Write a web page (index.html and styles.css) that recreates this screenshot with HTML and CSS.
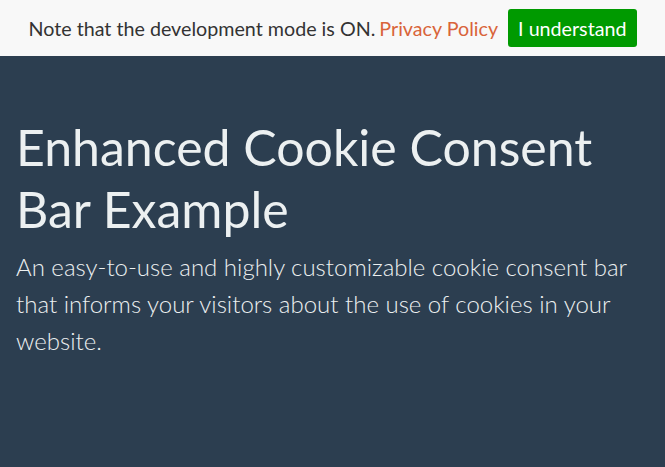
FILE: index.html
```html
<!DOCTYPE html>
<html lang="en">
<head>
    <meta charset="UTF-8">
    <meta name="viewport" content="width=device-width, initial-scale=1.0">
    <title>Enhanced Cookie Consent Bar Example</title>
    <link rel="stylesheet" href="styles.css">
</head>
<body>
    <div class="cookie-bar">
        <span class="cookie-text">Note that the development mode is ON.</span>
        <a href="#" class="cookie-link">Privacy Policy</a>
        <button class="cookie-btn">I understand</button>
    </div>

    <div class="container">
        <h1>Enhanced Cookie Consent Bar Example</h1>
        <p class="lead">An easy-to-use and highly customizable cookie consent bar that informs your visitors about the use of cookies in your website.</p>
    </div>
</body>
</html>
```

FILE: styles.css
```css
* {
    box-sizing: border-box;
    margin: 0;
    padding: 0;
}

body {
    font-family: Lato, 'Open Sans', sans-serif;
    background: #2c3e50;
    color: #ecf0f1;
    height: 100vh;
    overflow: hidden;
}

.cookie-bar {
    background: #f8f8f8;
    height: 56px;
    display: flex;
    align-items: center;
    justify-content: center;
    gap: 4px;
    font-size: 19.7px;
    color: #333;
}

.cookie-link {
    color: #d9643a;
    text-decoration: none;
}

.cookie-btn {
    font-family: inherit;
    font-size: 19.7px;
    color: #fff;
    background: #009a00;
    border: none;
    border-radius: 3px;
    padding: 0 10px;
    height: 38px;
    margin-left: 6px;
}

.container {
    padding: 60px 16px 0;
}

h1 {
    font-weight: 400;
    font-size: 50px;
    line-height: 62px;
    margin-bottom: 8px;
}

.lead {
    font-weight: 300;
    font-size: 24px;
    line-height: 37px;
}
```
